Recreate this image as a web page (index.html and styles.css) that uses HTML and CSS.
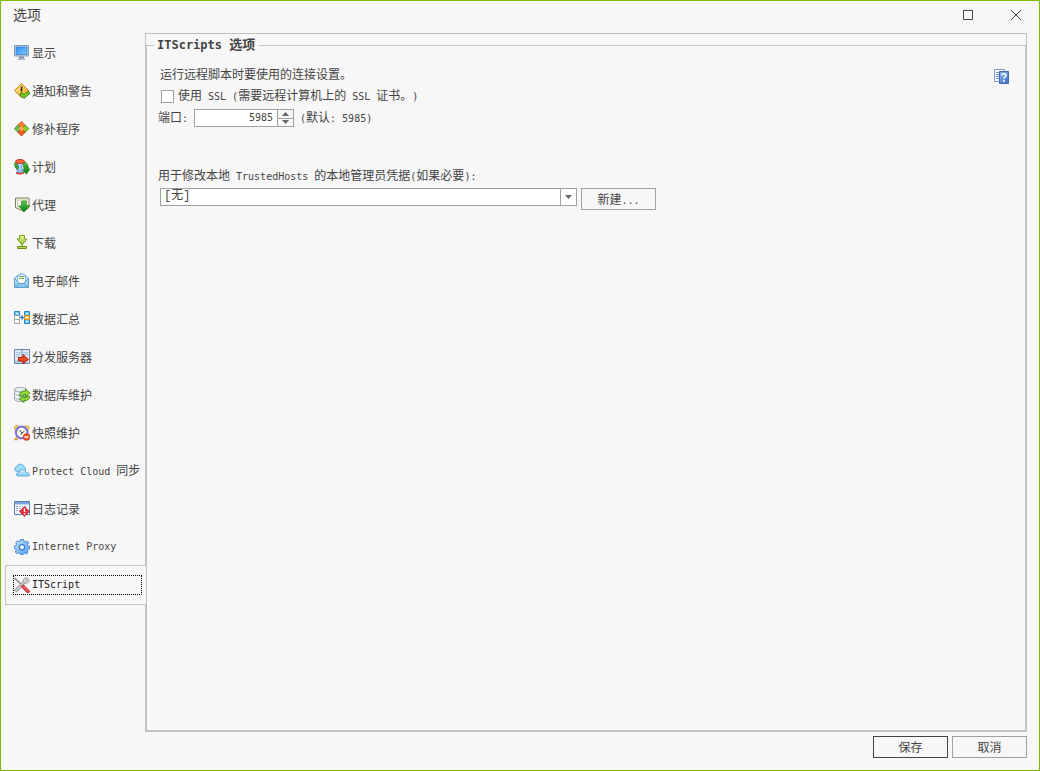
FILE: index.html
```html
<!DOCTYPE html>
<html lang="zh-CN">
<head>
    <meta charset="UTF-8">
    <meta name="viewport" content="width=device-width, initial-scale=1.0">
    <title>选项</title>
    <link rel="stylesheet" href="styles.css">
</head>
<body>
    <svg class="defs" width="0" height="0" aria-hidden="true">
        <defs>
            <linearGradient id="blue" x1="0" y1="0" x2="1" y2="1"><stop offset="0" stop-color="#c4e6ff"/><stop offset="1" stop-color="#4f9df0"/></linearGradient>
            <linearGradient id="help" x1="0" y1="0" x2="1" y2="1"><stop offset="0" stop-color="#8db6ee"/><stop offset="1" stop-color="#3a6cc4"/></linearGradient>
            <linearGradient id="screen" x1="0" y1="0" x2="1" y2="1"><stop offset="0" stop-color="#2d8dea"/><stop offset="1" stop-color="#7cc8ff"/></linearGradient>
            <linearGradient id="yellow" x1="0" y1="0" x2="1" y2="1"><stop offset="0" stop-color="#fff09a"/><stop offset="1" stop-color="#f2a70c"/></linearGradient>
            <linearGradient id="green" x1="0" y1="0" x2="0" y2="1"><stop offset="0" stop-color="#5cc94a"/><stop offset="1" stop-color="#087a10"/></linearGradient>
            <linearGradient id="lime" x1="0" y1="0" x2="0" y2="1"><stop offset="0" stop-color="#e6f5a8"/><stop offset="1" stop-color="#8fbf20"/></linearGradient>
            <linearGradient id="sky" x1="0" y1="0" x2="0" y2="1"><stop offset="0" stop-color="#e4f6ff"/><stop offset="1" stop-color="#7cc6ef"/></linearGradient>
            <linearGradient id="gray" x1="0" y1="0" x2="1" y2="0"><stop offset="0" stop-color="#ffffff"/><stop offset="1" stop-color="#aeb9c4"/></linearGradient>
        </defs>
    </svg>
    <div class="window">
        <header class="titlebar">
            <h1>选项</h1>
            <button type="button" class="caption" aria-label="最大化">
                <svg width="10" height="10" viewBox="0 0 10 10"><path d="M.5.5h9v9h-9z" fill="none" stroke="#444"/></svg>
            </button>
            <button type="button" class="caption" aria-label="关闭">
                <svg width="10" height="10" viewBox="0 0 10 10"><path d="M0 0l10 10M10 0L0 10" stroke="#444"/></svg>
            </button>
        </header>
        <div class="main">
            <nav class="sidebar">
                <ul>
                    <li><a href="#">
                        <svg class="icon" viewBox="0 0 16 16"><path d="M.5.5h14v10.500H.5z" fill="#c9d9ec" stroke="#8097b8"/><path d="M2 2h11v7.500H2z" fill="url(#screen)" stroke="#2f72c0" stroke-width=".6"/><path d="M5 11.500h5V13H5z" fill="#7f93ad"/><path d="M4 13h7v2H4z" fill="#a9b7c8"/></svg>
                        <span>显示</span></a></li>
                    <li><a href="#">
                        <svg class="icon" viewBox="0 0 16 16"><path d="M7.500.6l7 7-7 7-7-7z" fill="url(#yellow)" stroke="#b77e16"/><path d="M7.500 3.500v5" stroke="#222" stroke-width="1.600"/><circle cx="7.500" cy="10.500" r="1" fill="#222"/><path d="M6.500 10.500l3.500 3L15.500 9" fill="none" stroke="#2c7d0b" stroke-width="3.400"/><path d="M7 11l3 2.500L15 9.500" fill="none" stroke="#79d627" stroke-width="1.800"/></svg>
                        <span>通知和警告</span></a></li>
                    <li><a href="#">
                        <svg class="icon" viewBox="0 0 16 16"><path d="M7.500.500L11.200 4 7.500 7.700 3.800 4z" fill="#ff7d33" stroke="#c44712" stroke-width=".7"/><path d="M3.800 4l3.700 3.700-3.700 3.600L.3 7.700z" fill="#76b957" stroke="#397a1f" stroke-width=".7"/><path d="M11.200 4l3.600 3.700-3.600 3.600-3.700-3.600z" fill="#8acb20" stroke="#39750a" stroke-width=".7"/><path d="M7.500 7.700l3.700 3.600-3.700 3.700-3.700-3.700z" fill="#f45c20" stroke="#9d3510" stroke-width=".7"/><circle cx="7.500" cy="7.700" r="2.200" fill="#ffa04d"/></svg>
                        <span>修补程序</span></a></li>
                    <li><a href="#">
                        <svg class="icon" viewBox="0 0 16 16"><path d="M1 3.500Q-.5 7 2.500 10L4 12l2-5zM9 2q5 1 5.500 8H16l-3.500 5L8 11h2z" fill="url(#green)" stroke="#1c7219" stroke-width=".6"/><path d="M2.500 3.500h7L7.500 8l2 5.500h-7L5 8z" fill="#b9dcfa" stroke="#487bb8" stroke-width=".8"/><path d="M4 10.500h4l1 3H3z" fill="#8bb9ee"/><ellipse cx="6" cy="2.500" rx="4.500" ry="2" fill="#ff6a3a" stroke="#bd1712" stroke-width=".8"/><path d="M2 13q4 2 8 0v1.500q-4 2-8 0z" fill="#e6311e"/></svg>
                        <span>计划</span></a></li>
                    <li><a href="#">
                        <svg class="icon" viewBox="0 0 16 16"><path d="M1.500 1h13.500v9.500l-5 4-8.500-4z" fill="#fffef2" stroke="#7c765b"/><path d="M2 3h12.500M3.500 3v7.500" stroke="#c9c5a7"/><path d="M7.500 4h5v4.500H16L10 15 4.500 9h3z" fill="url(#green)" stroke="#2c8a25" stroke-width=".7"/></svg>
                        <span>代理</span></a></li>
                    <li><a href="#">
                        <svg class="icon" viewBox="0 0 16 16"><path d="M5.500.5h5V4h2.500L8 10 3 4h2.500z" fill="url(#lime)" stroke="#7a9c1f"/><path d="M7.500 9v2h1V9z" fill="#7a9c1f"/><path d="M3.500 11.500h9v2h-9z" fill="#b7d84c" stroke="#6e8d18"/></svg>
                        <span>下载</span></a></li>
                    <li><a href="#">
                        <svg class="icon" viewBox="0 0 16 16"><path d="M.5 5L4 2.500Q7.500-1 11.500 2.500L14.500 5v9.500H.5z" fill="url(#sky)" stroke="#5d9ed2"/><path d="M3.500 3.500h8V9l-4 2.500-4-2.500z" fill="#fff" stroke="#68a8d5" stroke-width=".7"/><path d="M5.500 3.500h4M5 5.500h5" stroke="#6ca83e"/><path d="M1 14.500l4.500-4h4l4.500 4M1 6l4.500 4.500M14 6l-4.500 4.500" fill="none" stroke="#4d91ca" stroke-width=".8"/></svg>
                        <span>电子邮件</span></a></li>
                    <li><a href="#">
                        <svg class="icon" viewBox="0 0 16 16"><path d="M.5.500h5v4h-5z" fill="#64c5f5" stroke="#2a83c7"/><path d="M.5 4.500h5v4h-5zM.5 8.500h5v4h-5z" fill="#fff" stroke="#9aa2ab"/><path d="M10.500.500h5v4h-5zM10.500 8.500h5v4h-5z" fill="#64c5f5" stroke="#2a83c7"/><path d="M10.500 4.500h5v4h-5z" fill="#ffcf6a" stroke="#d98c1c"/><path d="M2 2.500h2M12 2.500h2M12 6.500h2M12 10.500h2" stroke="#fff"/><path d="M6 6h1.500V3.500L10 6.500l-2.500 3V7H6z" fill="#1e74c5"/></svg>
                        <span>数据汇总</span></a></li>
                    <li><a href="#">
                        <svg class="icon" viewBox="0 0 16 16"><path d="M.5.500h15v14h-15z" fill="#dce8f5" stroke="#6d87aa"/><path d="M8 1v13" stroke="#7b96b9"/><path d="M2 3.500h5M2 5.500h5M9 3.500h5M9 5.500h5M2 7.500h3" stroke="#a9c0dc"/><path d="M1 12.500h7" stroke="#a7bdd5" stroke-width="2"/><path d="M4.500 8.500h4.500V5.500l5.500 5-5.500 4.500v-3H4.500z" fill="#ed4b24" stroke="#a82313"/></svg>
                        <span>分发服务器</span></a></li>
                    <li><a href="#">
                        <svg class="icon" viewBox="0 0 16 16"><path d="M.5 2.500v9.500q0 2.500 6 2.500t6-2.500V2.500z" fill="url(#gray)" stroke="#9ca8b4"/><ellipse cx="6.500" cy="2.700" rx="6" ry="2.300" fill="#e8edf1" stroke="#9ca8b4"/><path d="M.5 6.500q2 2 5 2M.5 10.500q2 2 5 2" fill="none" stroke="#a9b5c1"/><path d="M5.500 9Q6 3.500 11.500 4V2L16 6l-4.500 3.500V7.500Q9 7 8 9z" fill="#8fdc32" stroke="#357f0b" stroke-width=".8"/><path d="M15.500 9q0 5-5.500 4.500V15.500L5.500 12 10 8.800V11q2.500 0 3-2z" fill="#8fdc32" stroke="#357f0b" stroke-width=".8"/></svg>
                        <span>数据库维护</span></a></li>
                    <li><a href="#">
                        <svg class="icon" viewBox="0 0 16 16"><circle cx="3" cy="3" r="2.600" fill="#ffcd54" stroke="#d79827" stroke-width=".7"/><circle cx="12.500" cy="3" r="2.600" fill="#ffcd54" stroke="#d79827" stroke-width=".7"/><path d="M3 12l-2 2.500h3" fill="none" stroke="#e0a02c" stroke-width="1.500"/><circle cx="7.700" cy="7.500" r="5.800" fill="#fffef0" stroke="#7f78dc" stroke-width="2.200"/><path d="M5.500 5l2.500 3 2.500-2M8 8l-1.500 2" fill="none" stroke="#444"/><circle cx="12.500" cy="12" r="3.400" fill="#f2522f" stroke="#c32b1a" stroke-width=".6"/><path d="M10.500 12h4" stroke="#fff" stroke-width="1.500"/></svg>
                        <span>快照维护</span></a></li>
                    <li><a href="#">
                        <svg class="icon" viewBox="0 0 16 16"><path d="M2.500 8.500Q.3 7.500.7 5.500q.3-1.500 2-1.500Q3.500.8 6.500 1q2.800.2 3 2.500 3 .5 2 4z" fill="#a1dcfa" stroke="#4aa6dc" stroke-width=".8"/><path d="M4 13q-2 0-1.500-2 .5-1.600 2.500-1.500Q5.500 6.500 8.500 6.500q3 .2 3.500 3 3-.3 3.500 2 .2 1.500-1.500 1.500z" fill="url(#sky)" stroke="#4aa6dc" stroke-width=".8"/></svg>
                        <span><span class="en">Protect Cloud </span>同步</span></a></li>
                    <li><a href="#">
                        <svg class="icon" viewBox="0 0 16 16"><path d="M.5.500h15v13h-15z" fill="#f5f9ff" stroke="#607eaa"/><path d="M1 1h14v2.500H1z" fill="#7aa4dc"/><path d="M2 5.500h2M2 7.500h2M2 9.500h2" stroke="#8fa9d0"/><path d="M5 5.500h8M5 7.500h4M5 9.500h3" stroke="#b4c4da"/><path d="M10.500 5.500l5 5-5 5-5-5z" fill="#e92e35" stroke="#b61522" stroke-width=".6"/><path d="M10.500 7.500V11M10.500 12v1.500" stroke="#fff" stroke-width="1.400"/></svg>
                        <span>日志记录</span></a></li>
                    <li><a href="#">
                        <svg class="icon" viewBox="0 0 16 16"><path d="M6.500.5h3l.5 2 1.200.5L13 2l1.600 1.700-1 1.900.4 1.100 1.600.5v2.500l-1.800.6-.5 1.200.8 1.800-1.800 1.700-1.900-1-1 .5-.6 1.500H6.500l-.6-1.800-1.200-.4-1.900.8L1.300 13l1-1.900-.5-1L.4 9.500V7l1.700-.6.5-1.200-.9-1.700L3.400 1.800l1.800.9L6 2.400z" fill="url(#blue)" stroke="#3274c8" stroke-width=".8"/><circle cx="8" cy="8.200" r="2.600" fill="#f7f7f7" stroke="#3876ca" stroke-width="1.200"/></svg>
                        <span class="en">Internet Proxy</span></a></li>
                    <li class="selected"><a href="#" aria-current="page">
                        <svg class="icon" viewBox="0 0 16 16"><path d="M.5 1l8.500 8" stroke="#8f8f8f" stroke-width="1.700"/><path d="M1 14.500L10.500 5" stroke="#888" stroke-width="3.200"/><path d="M1 14.500L10.500 5" stroke="#cfcfcf" stroke-width="1.800"/><path d="M14 1.200Q11 0 9.500 2.200 8.800 4 10.200 5.500q1.800 1.400 3.500.4Q15.800 4.500 15 2.200L12.700 4.200 11.500 3.500z" fill="#ddd" stroke="#989898" stroke-width=".8"/><path d="M9 9.500l5 5" stroke="#c53a3e" stroke-width="3.600" stroke-linecap="round"/><path d="M9 9.200l5 5" stroke="#f06466" stroke-width="1.600"/></svg>
                        <span class="en">ITScript</span></a></li>
                </ul>
            </nav>
            <main class="panel">
                <fieldset class="group">
                    <legend><span class="en">ITScripts </span>选项</legend>
                    <div class="intro">
                        <p>运行远程脚本时要使用的连接设置。</p>
                        <button type="button" class="help" aria-label="帮助">
                            <svg class="icon" viewBox="0 0 16 16"><path d="M.5.5h10v12H.5z" fill="#fff" stroke="#7b9ad4"/><path d="M2 3.500h6M2 5.500h3M2 7.500h3M2 9.500h3" stroke="#6c8dce"/><path d="M5.500 2.500h9v12h-9z" fill="url(#help)" stroke="#3f68b5"/><path d="M8 6.500Q8 4.700 10 4.700t2 1.700q0 1-1 1.500-1 .5-1 1.800M10 11v2" fill="none" stroke="#fff" stroke-width="1.600"/></svg>
                        </button>
                    </div>
                    <div class="row ssl">
                        <input type="checkbox" id="ssl">
                        <label for="ssl">使用<span class="en"> SSL (</span>需要远程计算机上的<span class="en"> SSL </span>证书。<span class="en">)</span></label>
                    </div>
                    <div class="row port">
                        <label for="port">端口<span class="en">:</span></label>
                        <div class="spinner">
                            <input type="number" id="port" value="5985">
                            <div class="steps">
                                <button type="button" aria-label="增加"><svg width="7" height="4" viewBox="0 0 7 4"><path d="M3.500 0L7 4H0z" fill="#666"/></svg></button>
                                <button type="button" aria-label="减少"><svg width="7" height="4" viewBox="0 0 7 4"><path d="M0 0h7L3.500 4z" fill="#666"/></svg></button>
                            </div>
                        </div>
                        <span><span class="en">(</span>默认<span class="en">: 5985)</span></span>
                    </div>
                    <label class="cred-label" for="cred">用于修改本地<span class="en"> TrustedHosts </span>的本地管理员凭据<span class="en">(</span>如果必要<span class="en">):</span></label>
                    <div class="cred">
                        <div class="combo">
                            <select id="cred"><option>[无]</option></select>
                            <span class="arrow"><svg width="7" height="4" viewBox="0 0 7 4"><path d="M0 0h7L3.500 4z" fill="#666"/></svg></span>
                        </div>
                        <button type="button" class="btn">新建<span class="en">...</span></button>
                    </div>
                </fieldset>
            </main>
        </div>
        <footer class="footer">
            <button type="submit" class="btn default">保存</button>
            <button type="button" class="btn">取消</button>
        </footer>
    </div>
</body>
</html>
```

FILE: styles.css
```css
* {
    box-sizing: border-box;
}
body {
    margin: 0;
    background-color: #f7f7f7;
    color: #444;
    font-family: "Noto Sans CJK SC", sans-serif;
    font-size: 12px;
    line-height: 18px;
    text-spacing-trim: space-all;
}
button, input, select {
    font: inherit;
    color: inherit;
    margin: 0;
    padding: 0;
    border-radius: 0;
}
h1, p, ul {
    margin: 0;
    padding: 0;
}
svg {
    display: block;
    flex: none;
}
.defs {
    position: absolute;
}
.en {
    font-family: "DejaVu Sans Mono", monospace;
    font-size: 10px;
    white-space: pre;
}
.icon {
    width: 16px;
    height: 16px;
}
.window {
    display: flex;
    flex-direction: column;
    min-height: 100vh;
    border: 1px solid #80b900;
}

/* title bar */
.titlebar {
    display: flex;
    gap: 2px;
    height: 32px;
    padding-left: 12px;
}
.titlebar h1 {
    flex: 1;
    font-size: 14px;
    font-weight: normal;
    line-height: 26px;
}
.caption {
    display: flex;
    align-items: center;
    justify-content: center;
    width: 46px;
    height: 28px;
    border: none;
    background: none;
}

/* tabs on the left */
.main {
    display: flex;
    flex: 1;
    padding: 0 12px 0 4px;
}
.sidebar {
    width: 140px;
    padding-top: 1px;
}
.sidebar ul {
    list-style: none;
}
.sidebar li {
    height: 38px;
    padding: 9px 4px 9px 8px;
}
.sidebar a {
    display: flex;
    align-items: center;
    gap: 2px;
    height: 20px;
    padding: 0 1px;
    color: inherit;
    text-decoration: none;
    white-space: nowrap;
}
.sidebar .selected {
    position: relative;
    height: 40px;
    margin: -1px -1px 0 0;
    padding: 9px 4px 9px 7px;
    border: 1px solid #c4c4c4;
    border-right: none;
    background-color: #f7f7f7;
}
.sidebar .selected a {
    padding: 0;
    border: 1px dotted #000;
    color: #222;
}

/* settings */
.panel {
    display: flex;
    flex: 1;
    border: 1px solid #c0c0c0;
}
.group {
    flex: 1;
    min-width: 0;
    margin: 0;
    padding: 7px 15px 8px 12px;
    border: 1px solid #c4c4c4;
}
.group legend {
    margin-left: -5px;
    padding: 0 4px 2px 3px;
    font-size: 13px;
    font-weight: bold;
    line-height: 20px;
}
.group legend .en {
    font-size: 12px;
}
.intro {
    display: flex;
    justify-content: space-between;
    height: 22px;
    padding: 1px 0 0 1px;
}
.help {
    height: 16px;
    margin-top: 4px;
    border: none;
    background: none;
}
.row {
    display: flex;
    align-items: center;
    white-space: nowrap;
}
.ssl {
    gap: 4px;
    height: 20px;
    padding-left: 2px;
}
.ssl input {
    appearance: none;
    width: 13px;
    height: 13px;
    border: 1px solid #a0a0a0;
    background-color: #fff;
}
.ssl input:checked {
    background-color: #555;
    box-shadow: inset 0 0 0 2px #fff;
}
.port {
    gap: 6px;
    height: 24px;
}
.port label {
    width: 29px;
    margin-left: -1px;
}
.port .spinner {
    margin-left: 1px;
}
.spinner {
    display: flex;
    width: 100px;
    height: 18px;
    border: 1px solid #a0a0a0;
    background-color: #fff;
}
.spinner input {
    flex: 1;
    min-width: 0;
    padding-right: 4px;
    border: none;
    background: none;
    font-family: "DejaVu Sans Mono", monospace;
    font-size: 10px;
    text-align: right;
    appearance: textfield;
}
.spinner input::-webkit-inner-spin-button {
    display: none;
}
.steps {
    display: flex;
    flex-direction: column;
    width: 16px;
    border-left: 1px solid #a0a0a0;
    background-color: #f7f7f7;
}
.steps button {
    display: flex;
    flex: 1;
    align-items: center;
    justify-content: center;
    border: none;
    background: none;
}
.steps button + button {
    border-top: 1px solid #a0a0a0;
}
.cred-label {
    display: block;
    margin: 36px 0 2px -1px;
}
.cred {
    display: flex;
    align-items: flex-start;
    gap: 4px;
    padding-left: 1px;
}
.combo {
    display: flex;
    width: 417px;
    height: 18px;
    border: 1px solid #a0a0a0;
    background-color: #fff;
    position: relative;
}
.combo select {
    flex: 1;
    appearance: none;
    height: 14px;
    padding: 0 20px 0 3px;
    border: none;
    background: none;
    font-family: "Liberation Mono", "Noto Sans CJK SC", monospace;
    line-height: 14px;
}
.arrow {
    position: absolute;
    top: 0;
    right: 0;
    display: flex;
    align-items: center;
    justify-content: center;
    width: 16px;
    height: 16px;
    border-left: 1px solid #a0a0a0;
    pointer-events: none;
}
.btn {
    width: 75px;
    height: 22px;
    border: 1px solid #a0a0a0;
    background-color: #f7f7f7;
    line-height: 20px;
}
.btn.default {
    border-color: #444;
}

.footer {
    display: flex;
    justify-content: flex-end;
    gap: 4px;
    padding: 4px 12px 12px;
}
```
